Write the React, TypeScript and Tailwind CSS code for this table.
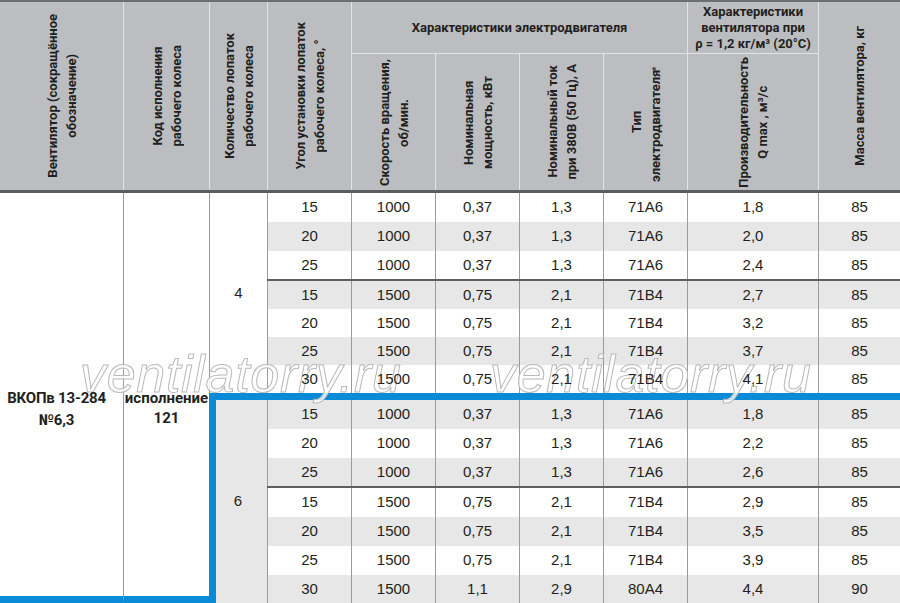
import React from 'react';

// Fan performance table: ВКОПв 13-284 №6,3
const rows = [
  { h: 'h-[29px]', v: ['15', '1000', '0,37', '1,3', '71A6', '1,8', '85'] },
  { h: 'h-[29px]', v: ['20', '1000', '0,37', '1,3', '71A6', '2,0', '85'] },
  { h: 'h-[28px]', v: ['25', '1000', '0,37', '1,3', '71A6', '2,4', '85'], after: 'dark' },
  { h: 'h-[28px]', v: ['15', '1500', '0,75', '2,1', '71B4', '2,7', '85'] },
  { h: 'h-[28px]', v: ['20', '1500', '0,75', '2,1', '71B4', '3,2', '85'] },
  { h: 'h-[28px]', v: ['25', '1500', '0,75', '2,1', '71B4', '3,7', '85'] },
  { h: 'h-[28px]', v: ['30', '1500', '0,75', '2,1', '71B4', '4,1', '85'], after: 'blue' },
  { h: 'h-[29px]', v: ['15', '1000', '0,37', '1,3', '71A6', '1,8', '85'] },
  { h: 'h-[29px]', v: ['20', '1000', '0,37', '1,3', '71A6', '2,2', '85'] },
  { h: 'h-[28px]', v: ['25', '1000', '0,37', '1,3', '71A6', '2,6', '85'], after: 'dark' },
  { h: 'h-[29px]', v: ['15', '1500', '0,75', '2,1', '71B4', '2,9', '85'] },
  { h: 'h-[29px]', v: ['20', '1500', '0,75', '2,1', '71B4', '3,5', '85'] },
  { h: 'h-[29px]', v: ['25', '1500', '0,75', '2,1', '71B4', '3,9', '85'] },
  { h: 'h-[29px]', v: ['30', '1500', '1,1', '2,9', '80A4', '4,4', '90'] },
];

function Vert({ children }: { children: React.ReactNode }) {
  return (
    <div className="[writing-mode:vertical-rl] rotate-180 text-center leading-[19px] whitespace-nowrap">
      {children}
    </div>
  );
}

// hollow site watermark, sits under the cell text
function Watermark({ className }: { className: string }) {
  return (
    <div
      className={`absolute z-[1] pointer-events-none select-none italic text-[52px] tracking-[0.7px] leading-none font-['Liberation_Sans',Arial,sans-serif] text-white/80 [-webkit-text-stroke:1px_#b9b9b9] ${className}`}
    >
      ventilatorry.ru
    </div>
  );
}

export default function App() {
  return (
    <div className="relative w-[900px] h-[603px] overflow-hidden bg-white text-[#231f20] font-['Liberation_Sans',Arial,sans-serif]">
      {/* Header */}
      <div className="h-[193px] border-t-2 border-t-[#6d6e71] border-b-[3px] border-b-[#5b5c5e] bg-[#bcbdc0] grid grid-cols-[123px_86px_58px_84px_84px_84px_84px_84px_131px_82px] grid-rows-[52px_136px] font-['Roboto',sans-serif] font-bold text-[13px]">
        <div className="row-span-2 flex items-center justify-center">
          <Vert>Вентилятор (сокращённое<br />обозначение)</Vert>
        </div>
        <div className="row-span-2 border-l border-[#e2e2e3] flex items-center justify-center">
          <Vert>Код исполнения<br />рабочего колеса</Vert>
        </div>
        <div className="row-span-2 border-l border-[#e2e2e3] flex items-center justify-center">
          <Vert>Количество лопаток<br />рабочего колеса</Vert>
        </div>
        <div className="row-span-2 border-l border-[#e2e2e3] flex items-center justify-center">
          <Vert>Угол установки лопаток<br />рабочего колеса, °</Vert>
        </div>
        <div className="col-span-4 border-l border-b border-[#e2e2e3] flex items-center justify-center">
          Характеристики электродвигателя
        </div>
        <div className="border-l border-b border-[#e2e2e3] flex items-center justify-center text-center leading-[16px]">
          <div>
            Характеристики<br />вентилятора при<br />ρ = 1,2 кг/м³ (20°С)
          </div>
        </div>
        <div className="row-span-2 border-l border-[#e2e2e3] flex items-center justify-center">
          <Vert>Масса вентилятора, кг</Vert>
        </div>
        <div className="border-l border-[#e2e2e3] flex items-center justify-center">
          <Vert>Скорость вращения,<br />об/мин.</Vert>
        </div>
        <div className="border-l border-[#e2e2e3] flex items-center justify-center">
          <Vert>Номинальная<br />мощность, кВт</Vert>
        </div>
        <div className="border-l border-[#e2e2e3] flex items-center justify-center">
          <Vert>Номинальный ток<br />при 380В (50 Гц), А</Vert>
        </div>
        <div className="border-l border-[#e2e2e3] flex items-center justify-center">
          <Vert>Тип<br />электродвигателя <sup>*</sup></Vert>
        </div>
        <div className="border-l border-[#e2e2e3] flex items-center justify-center">
          <Vert>Производительность<br />Q max , м³/с</Vert>
        </div>
      </div>

      {/* Body */}
      <div className="flex h-[410px]">
        <div className="w-[123px] shrink-0 border-b-[7px] border-b-[#0a8bd8] flex items-center justify-center pt-[28px] pr-[10px] text-center font-['Roboto',sans-serif] font-bold text-[15px] leading-[22px] tracking-[-0.2px]">
          <div className="relative z-[2]">ВКОПв 13-284<br />№6,3</div>
        </div>
        <div className="w-[86px] shrink-0 border-l border-l-[#9b9b9b] border-b-[7px] border-b-[#0a8bd8] flex items-center justify-center pt-[26px] text-center font-['Roboto',sans-serif] font-bold text-[15px] leading-[20px]">
          <div className="relative z-[2]">исполнение<br />121</div>
        </div>
        <div className="w-[58px] shrink-0 flex flex-col text-[15px]">
          <div className="h-[200px] shrink-0 border-l border-[#9b9b9b] flex items-center justify-center">4</div>
          <div className="flex-1 border-l-[7px] border-t-[7px] border-[#0a8bd8] bg-[#e6e7e6] flex items-center justify-center pr-[7px]">
            6
          </div>
        </div>
        <div className="flex-1 flex flex-col text-[15px]">
          {rows.map((r, i) => (
            <React.Fragment key={i}>
              <div
                className={`${r.h} shrink-0 grid grid-cols-[84px_84px_84px_84px_84px_131px_82px] ${
                  i % 2 === 1 ? 'bg-[#e6e7e6]' : 'bg-white'
                }`}
              >
                {r.v.map((c, j) => (
                  <div key={j} className="border-l border-[#9b9b9b] flex items-center justify-center">
                    <span className="relative z-[2]">{c}</span>
                  </div>
                ))}
              </div>
              {r.after === 'dark' && <div className="h-[2px] shrink-0 bg-[#5d5e60]" />}
              {r.after === 'blue' && <div className="h-[7px] shrink-0 bg-[#0a8bd8]" />}
            </React.Fragment>
          ))}
        </div>
      </div>

      <Watermark className="left-[80px] top-[348px]" />
      <Watermark className="left-[490px] top-[348px]" />
    </div>
  );
}
